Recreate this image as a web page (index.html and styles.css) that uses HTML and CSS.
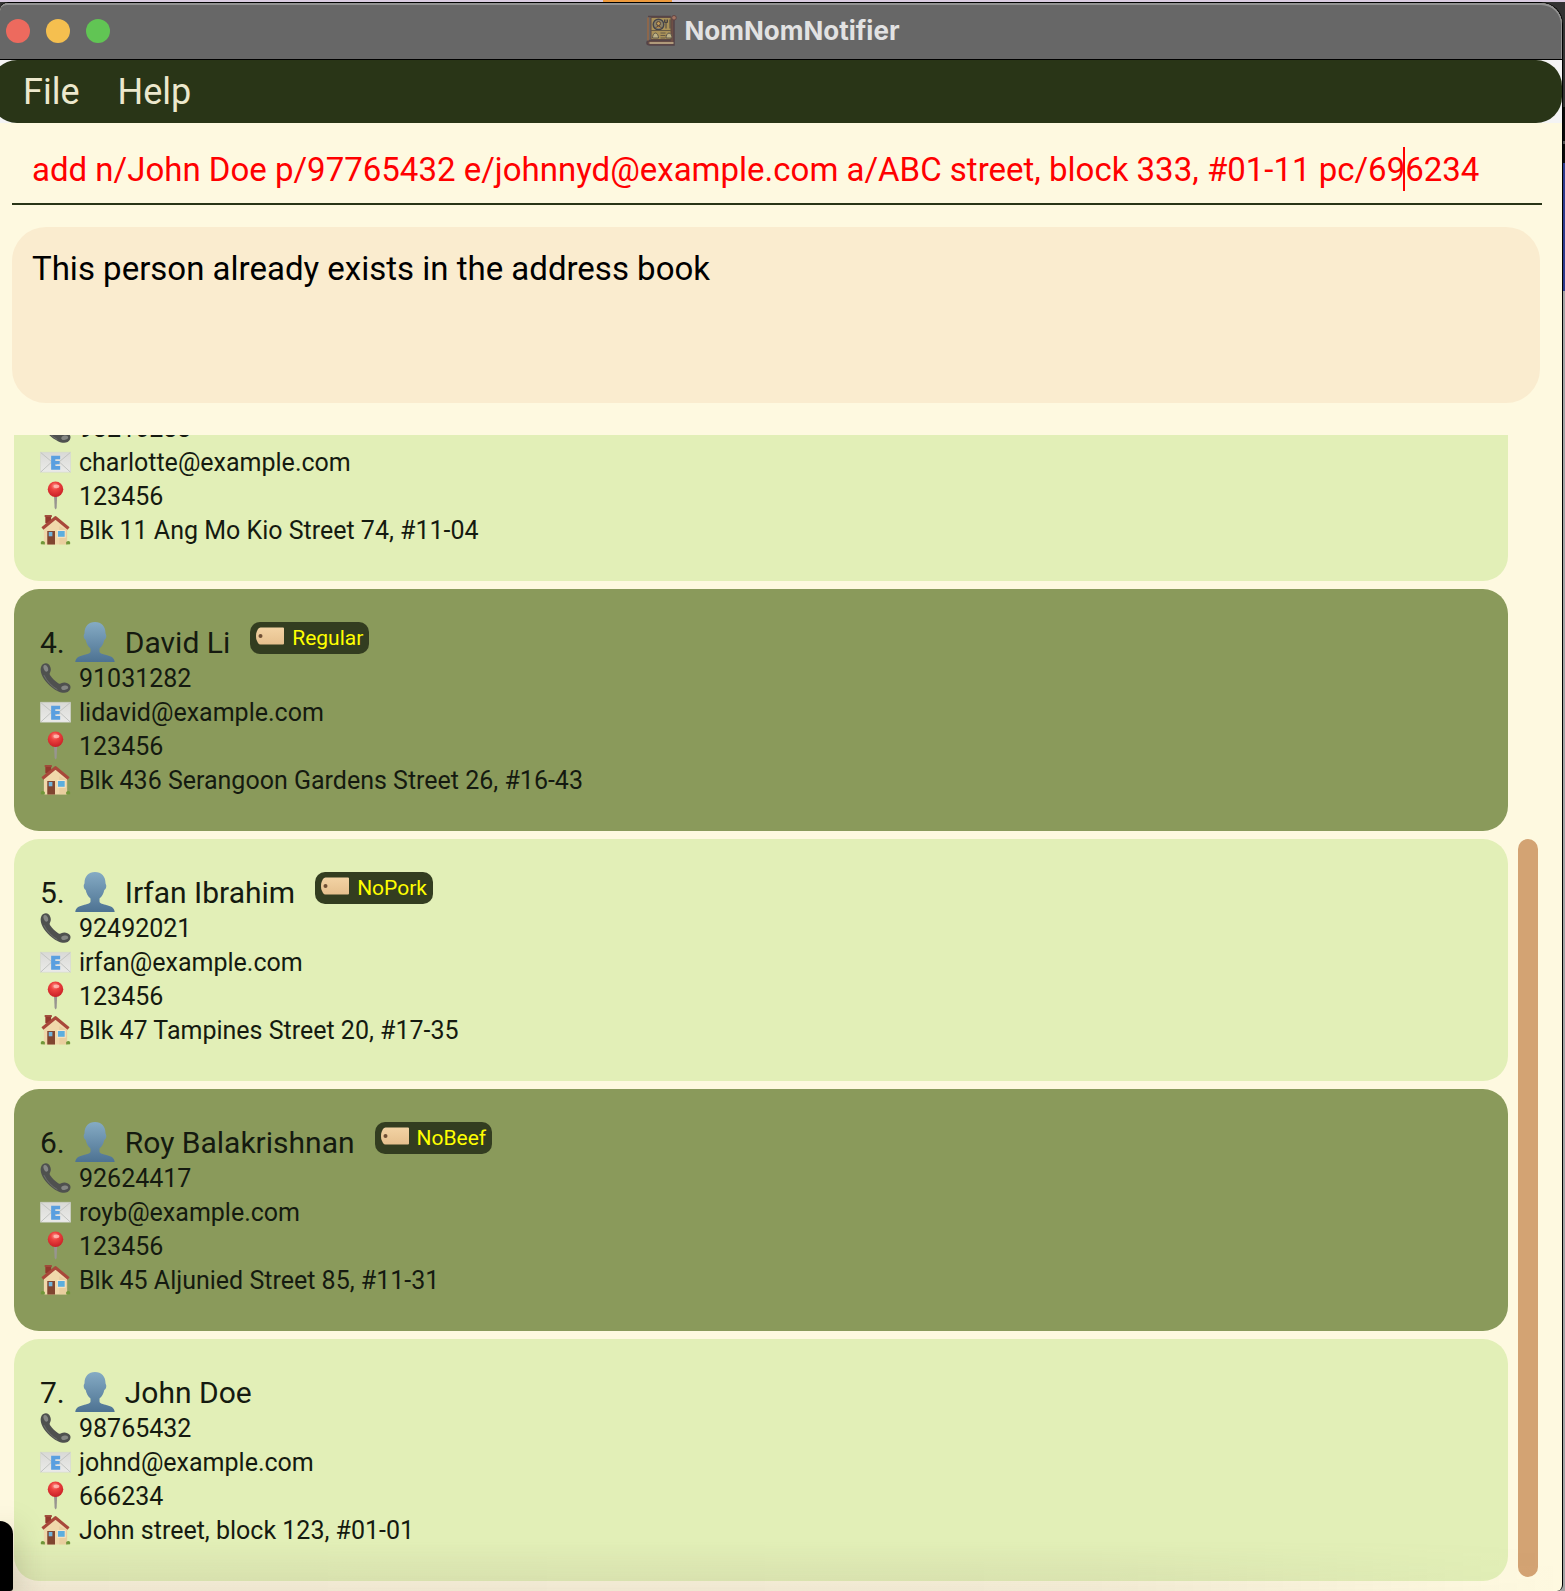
FILE: index.html
```html
<!DOCTYPE html>
<html lang="en">
<head>
<meta charset="utf-8">
<title>NomNomNotifier</title>
<link rel="stylesheet" href="styles.css">
</head>
<body>
<svg class="sprite" aria-hidden="true">
  <defs>
    <linearGradient id="g-person" x1="0" y1="0" x2="0" y2="1"><stop offset="0" stop-color="#85abc4"/><stop offset="1" stop-color="#4d7292"/></linearGradient>
    <linearGradient id="g-mail" x1="0" y1="0" x2="0" y2="1"><stop offset="0" stop-color="#d9d9d6"/><stop offset="1" stop-color="#ebebe9"/></linearGradient>
    <radialGradient id="g-pin" cx=".45" cy=".3" r=".7"><stop offset="0" stop-color="#ff9a90"/><stop offset=".35" stop-color="#ee4340"/><stop offset="1" stop-color="#c81f25"/></radialGradient>
    <linearGradient id="g-tag" x1="0" y1="0" x2="0" y2="1"><stop offset="0" stop-color="#f3d3a4"/><stop offset="1" stop-color="#e6c08e"/></linearGradient>
  </defs>
  <symbol id="i-person" viewBox="0 0 40 40">
    <path fill="url(#g-person)" d="M20 0c-6.500 0-10.500 4.500-10.500 11 0 1-.8 1.200-.8 3 0 2.500 1.200 3.500 2 4 .8 3.500 2 6.500 4.800 8.500v3c0 2-3.500 2.700-7.500 3.700C3.500 34.400.5 36 .3 40h39.400c-.2-4-3.200-5.600-7.700-6.800-4-1-7.500-1.700-7.500-3.700v-3c2.800-2 4-5 4.800-8.500.8-.5 2-1.500 2-4 0-1.800-.8-2-.8-3C30.500 4.500 26.500 0 20 0z"/>
  </symbol>
  <symbol id="i-phone" viewBox="0 0 32 32">
    <path fill="#4f514f" d="M1.500 3.500C3 .8 6.500-.2 8.800 1.700c2.200 2 3 5.600 1.800 8-.8 1.600-1 2.300.2 4 1.900 2.800 4.800 5.500 8 7.600 1.500 1 2.300.8 3.700-.1 2.500-1.300 6.500-.3 8.300 2 1.500 2.300.5 5.700-2.300 7.300-3 1.500-6.500.8-10-.9C10.500 25.600 4 18.500 1.500 11.800.6 9 .2 6 1.500 3.500z"/>
    <ellipse cx="6" cy="6" rx="2.200" ry="3.600" transform="rotate(-20 6 6)" fill="#858784"/>
    <ellipse cx="25.500" cy="26" rx="3.600" ry="2.200" transform="rotate(-12 25.500 26)" fill="#858784"/>
    <path d="M4 13c3 6.500 8 11.500 14 15" fill="none" stroke="#6d706d"/>
  </symbol>
  <symbol id="i-mail" viewBox="0 0 32 32">
    <path fill="url(#g-mail)" stroke="#d4d6d3" stroke-width=".6" d="M.5 6h31v20.500H.5z"/>
    <path d="M.8 6.300 16 19 31.200 6.300M.8 26.300 12 16M31.200 26.300 20 16" fill="none" stroke="#c0c2bf"/>
    <path fill="#5a9fe0" d="M11.500 9.500h9.300v3.700h-5v1.700h4.500v3.500h-4.500v1.800h5V24h-9.300z"/>
  </symbol>
  <symbol id="i-pin" viewBox="0 0 32 32">
    <path d="M14.400 14h3.400l-.6 14.500-1 1.500-1.100-1.500z" fill="#989590"/>
    <circle cx="16" cy="9" r="8" fill="url(#g-pin)"/>
    <ellipse cx="17" cy="6" rx="3" ry="2" fill="#ffc0b8" opacity=".8"/>
  </symbol>
  <symbol id="i-house" viewBox="0 0 32 32">
    <path fill="#92392c" d="M5.500 1h6v8h-6z"/><path fill="#a04a3a" d="M4.800.6h7.400v2H4.800z"/>
    <path fill="#f0d9ab" d="M4 14 16 4.500 28 14v17H4z"/>
    <path fill="#dfc28e" d="M20 30V12l8 4v15h-8z" opacity=".45"/>
    <path fill="none" stroke="#a8483a" stroke-width="3.200" stroke-linejoin="round" d="M2.500 14.500 16 3.300 29.500 14.500"/>
    <path fill="#804630" d="M7.500 17h8v14h-8z"/><path fill="#70b5dd" d="M9 18h3.800v4.500H9z"/>
    <path fill="#f8e6c6" d="M17.500 16h9v8h-9z"/><path fill="#5caede" d="M18.500 17h7v6h-7z"/>
    <path fill="#71983a" d="M1 30.700c-1-2.700 1.300-4.500 4-2.200v2.500zM31 30.700c1-2.700-1.300-4.500-4-2.200v2.500z"/>
  </symbol>
  <symbol id="i-tag" viewBox="0 0 28 18">
    <path fill="url(#g-tag)" d="M4.500.5h22.500q1 0 1 1v15q0 1-1 1H4.500Q3 17.500 2 16L.8 13.500Q0 12 0 9t.8-4.500L2 2Q3 .5 4.500.5z"/>
    <circle cx="4.500" cy="9" r="2" fill="#6f4f35"/>
  </symbol>
</svg>

<div class="app">
  <header class="titlebar">
    <div class="lights">
      <button class="light close" aria-label="Close"></button>
      <button class="light minimise" aria-label="Minimise"></button>
      <button class="light zoom" aria-label="Zoom"></button>
    </div>
    <h1 class="title">
      <svg class="logo" viewBox="0 0 32 32" aria-hidden="true">
        <path d="M3 1.500h22v24H5q-3 0-3 2.500 0 2 3 2h24V4" fill="#6d4f45" stroke="#554448" stroke-width="1.600"/>
        <path d="M6 2.500h20v22H6z" fill="#a99158" stroke="#604b43"/>
        <path d="M3 2.500v23" stroke="#8c674c" stroke-width="2"/>
        <path d="M4.500 28h24" stroke="#b09a7b" stroke-width="2"/>
        <circle cx="13.500" cy="9.500" r="5.300" fill="#8a8267" stroke="#45454b" stroke-width="1.400"/>
        <circle cx="13.500" cy="8.500" r="2" fill="#c09a55" stroke="#584439"/>
        <path d="M10.500 13q3-4 6 0" fill="#b0884e" stroke="#584439"/>
        <path d="M21 4.500v9M19.500 4.500v3h3v-3M25 4.500v9" stroke="#484442" fill="none"/>
        <path d="M6 15.500h20M15.500 18h5M15.500 20.500h5M15.500 23h5" stroke="#675a45"/>
        <path d="M7.500 23c0-2 1-5 3-5s3 3 3 5zM21 23c0-2 1-5 3-5s3 3 3 5z" fill="#beb285" stroke="#5e5749"/>
        <circle cx="29" cy="2.800" r="2.300" fill="#a37462" stroke="#604442"/>
      </svg>
      NomNomNotifier
    </h1>
  </header>

  <div class="menu-wrap">
    <nav class="menubar">
      <button class="menu">File</button>
      <button class="menu">Help</button>
    </nav>
  </div>

  <main class="content">
    <div class="command">
      <input class="command-input" type="text" aria-label="Command" spellcheck="false" value="add n/John Doe p/97765432 e/johnnyd@example.com a/ABC street, block 333, #01-11 pc/696234">
      <span class="caret"></span>
    </div>
    <div class="result" role="status">This person already exists in the address book</div>

    <div class="list-area">
      <div class="people">
        <article class="card">
          <ul class="details">
            <li><svg class="icon"><use href="#i-phone"/></svg>93210283</li>
            <li><svg class="icon"><use href="#i-mail"/></svg>charlotte@example.com</li>
            <li><svg class="icon"><use href="#i-pin"/></svg>123456</li>
            <li><svg class="icon"><use href="#i-house"/></svg>Blk 11 Ang Mo Kio Street 74, #11-04</li>
          </ul>
        </article>
        <article class="card dark">
          <div class="name-row"><h2 class="name"><span>4.</span><svg class="avatar"><use href="#i-person"/></svg><span>David Li</span></h2><span class="tag"><svg class="tag-icon"><use href="#i-tag"/></svg>Regular</span></div>
          <ul class="details">
            <li><svg class="icon"><use href="#i-phone"/></svg>91031282</li>
            <li><svg class="icon"><use href="#i-mail"/></svg>lidavid@example.com</li>
            <li><svg class="icon"><use href="#i-pin"/></svg>123456</li>
            <li><svg class="icon"><use href="#i-house"/></svg>Blk 436 Serangoon Gardens Street 26, #16-43</li>
          </ul>
        </article>
        <article class="card">
          <div class="name-row"><h2 class="name"><span>5.</span><svg class="avatar"><use href="#i-person"/></svg><span>Irfan Ibrahim</span></h2><span class="tag"><svg class="tag-icon"><use href="#i-tag"/></svg>NoPork</span></div>
          <ul class="details">
            <li><svg class="icon"><use href="#i-phone"/></svg>92492021</li>
            <li><svg class="icon"><use href="#i-mail"/></svg>irfan@example.com</li>
            <li><svg class="icon"><use href="#i-pin"/></svg>123456</li>
            <li><svg class="icon"><use href="#i-house"/></svg>Blk 47 Tampines Street 20, #17-35</li>
          </ul>
        </article>
        <article class="card dark">
          <div class="name-row"><h2 class="name"><span>6.</span><svg class="avatar"><use href="#i-person"/></svg><span>Roy Balakrishnan</span></h2><span class="tag"><svg class="tag-icon"><use href="#i-tag"/></svg>NoBeef</span></div>
          <ul class="details">
            <li><svg class="icon"><use href="#i-phone"/></svg>92624417</li>
            <li><svg class="icon"><use href="#i-mail"/></svg>royb@example.com</li>
            <li><svg class="icon"><use href="#i-pin"/></svg>123456</li>
            <li><svg class="icon"><use href="#i-house"/></svg>Blk 45 Aljunied Street 85, #11-31</li>
          </ul>
        </article>
        <article class="card">
          <div class="name-row"><h2 class="name"><span>7.</span><svg class="avatar"><use href="#i-person"/></svg><span>John Doe</span></h2></div>
          <ul class="details">
            <li><svg class="icon"><use href="#i-phone"/></svg>98765432</li>
            <li><svg class="icon"><use href="#i-mail"/></svg>johnd@example.com</li>
            <li><svg class="icon"><use href="#i-pin"/></svg>666234</li>
            <li><svg class="icon"><use href="#i-house"/></svg>John street, block 123, #01-01</li>
          </ul>
        </article>
      </div>
      <div class="scrollbar"><div class="thumb" style="height: 64.6%"></div></div>
    </div>
  </main>
</div>
<div class="dock-shade"></div>
<div class="dock-corner"></div>
</body>
</html>
```
FILE: styles.css
```css
* { box-sizing: border-box; }

body {
  margin: 0;
  height: 100vh;
  display: flex;
  padding: 2px 2px 0 0;
  overflow: hidden;
  position: relative;
  font-family: Roboto, "Liberation Sans", sans-serif;
  color: #151a10;
  background:
    linear-gradient(90deg, #d9cbe0 603px, #ee9a3c 603px 672px, #d9cbe0 672px) top / 100% 2px no-repeat,
    linear-gradient(#333 107px, #0b0b0b 107px 141px, #555 141px 144px, #0b0b0b 144px 163px, #2c3b8c 163px 291px, #a2a3a3 291px);
}

button { border: 0; padding: 0; background: none; font: inherit; color: inherit; }

.sprite { position: absolute; width: 0; height: 0; }

.app {
  flex: 1;
  min-width: 0;
  display: flex;
  flex-direction: column;
  overflow: hidden;
  border-top: 1px solid #000;
  border-right: 1px solid #000;
  border-radius: 8px 22px 6px 0;
  background: #fef9e0;
}

.titlebar {
  display: grid;
  grid-template-columns: 1fr auto 1fr;
  align-items: center;
  height: 57px;
  padding: 0 24px 0 6px;
  border-bottom: 1px solid #000;
  border-radius: 8px 20px 0 0;
  background: #676767;
  box-shadow: inset -1px 2px 0 #929292;
}

.lights { display: flex; gap: 16px; }
.light { width: 24px; height: 24px; border-radius: 50%; }
.close { background: #ed6a5e; }
.minimise { background: #f5bf4f; }
.zoom { background: #61c554; }

.title {
  display: flex;
  align-items: center;
  gap: 8px;
  margin: 0;
  font-family: Inter, "Liberation Sans", sans-serif;
  font-size: 26px;
  line-height: 32px;
  font-weight: 700;
  color: #e2e2e2;
}
.logo { width: 32px; height: 32px; }

.menu-wrap { background: #f4f4f4; }
.menubar {
  display: flex;
  gap: 38px;
  height: 63px;
  margin-left: -9px;
  padding-left: 32px;
  border-radius: 26px;
  background: #293517;
}
.menu { font-size: 36px; color: #ece8cd; }

.content {
  flex: 1;
  min-height: 0;
  display: flex;
  flex-direction: column;
  padding: 10px 20px 10px 12px;
}

.command { position: relative; height: 72px; border-bottom: 2px solid #293517; }
.command-input {
  display: block;
  width: 100%;
  height: 72px;
  padding: 0 20px;
  border: 0;
  outline: 0;
  background: none;
  font: 33px Roboto, "Liberation Sans", sans-serif;
  color: #f00;
}
.caret { position: absolute; left: 1391px; top: 14px; width: 2px; height: 44px; background: #f00; }

.result {
  height: 176px;
  margin: 22px 2px 32px 0;
  padding: 20px;
  border-radius: 34px;
  background: #faeccf;
  font-size: 33px;
  line-height: 44px;
  color: #000;
}

.list-area { flex: 1; min-height: 0; display: flex; gap: 10px; padding: 0 4px 0 2px; }
.people {
  flex: 1;
  min-width: 0;
  display: flex;
  flex-direction: column;
  justify-content: flex-end;
  gap: 8px;
  overflow: hidden;
}
.card { flex: none; padding: 33px 26px; border-radius: 25px; background: #e2efb7; }
.card.dark { background: #8a9a5b; }

.name-row { display: flex; gap: 20px; height: 40px; }
.name { display: flex; gap: 10px; margin: 0; font-size: 30px; line-height: 42px; font-weight: 400; }
.avatar { width: 40px; height: 40px; }

.tag {
  display: flex;
  align-items: center;
  gap: 8px;
  height: 32px;
  padding: 0 6px;
  border-radius: 10px;
  background: #333d20;
  font-size: 21px;
  color: #ff0;
}
.tag-icon { width: 28px; height: 18px; margin-bottom: 4px; }

.details { margin: 0; padding: 0; list-style: none; font-size: 25px; line-height: 34px; }
.details li { display: flex; gap: 8px; height: 34px; }
.icon { width: 31px; height: 32px; }

.scrollbar { width: 20px; display: flex; flex-direction: column; justify-content: flex-end; padding-bottom: 4px; }
.thumb { border-radius: 10px; background: #d3a373; }

.dock-shade {
  position: absolute;
  inset: auto 3px 0 0;
  height: 50px;
  background: linear-gradient(90deg, rgba(120, 90, 90, .12), rgba(120, 90, 90, .1) 70%, transparent);
  mask-image: linear-gradient(transparent, #000);
}
.dock-corner {
  position: absolute;
  left: 0;
  bottom: 0;
  width: 13px;
  height: 70px;
  border-radius: 0 13px 3px 0;
  background: #000;
  box-shadow: 0 6px 30px rgba(60, 50, 30, .35);
}
```
